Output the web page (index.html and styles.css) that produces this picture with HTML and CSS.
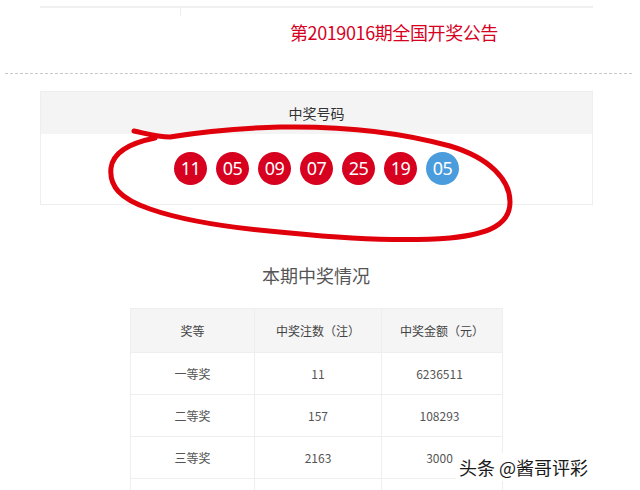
FILE: index.html
```html
<!DOCTYPE html>
<html lang="zh-CN">
<head>
  <meta charset="UTF-8" />
  <meta name="viewport" content="width=device-width, initial-scale=1.0"/>
  <title>第2019016期全国开奖公告</title>
  <link rel="stylesheet" href="styles.css">
</head>
<body>

<div class="page">
  <div class="top-box">
    <div class="top-left"></div>
    <h1 class="issue-title">第2019016期全国开奖公告</h1>
  </div>

  <div class="dash-line"></div>

  <div class="draw-box">
    <div class="draw-head">中奖号码</div>
    <div class="balls">
      <span class="ball red">11</span>
      <span class="ball red">05</span>
      <span class="ball red">09</span>
      <span class="ball red">07</span>
      <span class="ball red">25</span>
      <span class="ball red">19</span>
      <span class="ball blue">05</span>
    </div>
  </div>

  <h2 class="section-title">本期中奖情况</h2>

  <table class="prize-table">
    <tr>
      <th>奖等</th>
      <th>中奖注数（注）</th>
      <th>中奖金额（元）</th>
    </tr>
    <tr><td>一等奖</td><td>11</td><td>6236511</td></tr>
    <tr><td>二等奖</td><td>157</td><td>108293</td></tr>
    <tr><td>三等奖</td><td>2163</td><td>3000</td></tr>
    <tr><td>&nbsp;</td><td></td><td></td></tr>
  </table>

  <!-- hand drawn circle round the numbers -->
  <svg class="scribble" width="640" height="490" viewBox="0 0 640 490">
    <path d="M134 131 C148 134 158 137 170 137 C200 132 240 128 280 127 C340 126 400 132 450 146 C490 158 510 180 510 202 C510 224 490 234 450 238 C400 242 340 238 290 233 C240 229 190 223 150 209 C120 199 109 186 111 168 C113 152 130 143 155 138"
      fill="none" stroke="#e0000c" stroke-width="5" stroke-linecap="round" stroke-linejoin="round"/>
  </svg>

  <div class="watermark">头条 @酱哥评彩</div>
</div>

</body>
</html>
```

FILE: styles.css
```css
body {
  margin: 0;
  background: #fff;
  font-family: "Microsoft YaHei", "Noto Sans CJK SC", "Noto Sans", sans-serif;
  color: #333;
}

.page {
  position: relative;
  width: 640px;
  height: 490px;
  overflow: hidden;
  padding-top: 6px;
  box-sizing: border-box;
}

.top-box {
  margin-left: 40px;
  width: 553px;
  height: 52px;
  border-top: 2px solid #f0f0f0;
  display: flex;
}
.top-left {
  width: 140px;
  height: 8px;
  border-right: 1px solid #eee;
}
.issue-title {
  margin: 9px 0 0 109px;
  font-size: 18px;
  font-weight: normal;
  color: #d7001f;
  line-height: 30px;
  letter-spacing: -0.4px;
}

.dash-line {
  margin: 13px 8px 0 5px;
  border-top: 1px dashed #c8c8c8;
}

.draw-box {
  margin: 17px 0 0 40px;
  width: 551px;
  border: 1px solid #eee;
}
.draw-head {
  height: 42px;
  line-height: 42px;
  background: #f4f4f4;
  text-align: center;
  font-size: 14px;
  color: #333;
}
.balls {
  height: 70px;
  display: flex;
  justify-content: center;
  align-items: center;
  gap: 9px;
  padding-bottom: 2px;
  box-sizing: border-box;
}
.ball {
  width: 33px;
  height: 33px;
  border-radius: 50%;
  color: #fff;
  font-size: 18px;
  line-height: 33px;
  text-align: center;
  font-family: "Noto Sans", "Open Sans", sans-serif;
  letter-spacing: -0.5px;
}
.ball.red { background: #d7001f; }
.ball.blue { background: #4a9cdc; }

.section-title {
  margin: 57px 0 0;
  text-align: center;
  font-size: 18px;
  font-weight: normal;
  color: #555;
  line-height: 26px;
  padding-right: 8px;
}

.prize-table {
  margin: 20px 0 0 130px;
  width: 373px;
  table-layout: fixed;
  border-collapse: collapse;
  font-size: 12px;
  color: #555;
}
.prize-table th,
.prize-table td {
  border: 1px solid #eee;
  text-align: center;
  font-weight: normal;
}
.prize-table th {
  height: 41px;
  background: #f5f5f5;
  color: #444;
}
.prize-table td { height: 39px; }
.prize-table td:nth-child(3) { padding-right: 6px; }
.prize-table th:nth-child(1) { width: 121px; }
.prize-table th:nth-child(2) { width: 124px; }

.scribble {
  position: absolute;
  left: 0;
  top: 0;
  pointer-events: none;
}

.watermark {
  position: absolute;
  left: 456px;
  top: 453px;
  padding: 0 3px;
  background: rgba(255,255,255,0.9);
  font-size: 18px;
  line-height: 28px;
  color: #1a1a1a;
}
```
